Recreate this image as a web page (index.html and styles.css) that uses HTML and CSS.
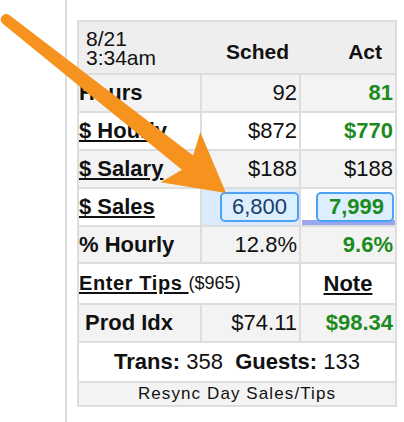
FILE: index.html
```html
<!DOCTYPE html>
<html>
<head>
<meta charset="utf-8">
<link rel="stylesheet" href="styles.css">
</head>
<body>
<div class="frame">
  <div class="grid">
    <div class="hdr">
      <div class="stamp"><div>8/21</div><div>3:34am</div></div>
      <div class="hcol">Sched</div>
      <div class="hcol act-h">Act</div>
    </div>

    <div class="cell lbl alt">Hours</div>
    <div class="cell num alt">92</div>
    <div class="cell num act alt">81</div>

    <div class="cell lbl"><a href="#">$ Hourly</a></div>
    <div class="cell num">$872</div>
    <div class="cell num act">$770</div>

    <div class="cell lbl alt"><a href="#">$ Salary</a></div>
    <div class="cell num alt">$188</div>
    <div class="cell num alt">$188</div>

    <div class="cell lbl"><a href="#">$ Sales</a></div>
    <div class="cell num focus"><input class="amt" value="6,800"></div>
    <div class="cell num bar"><input class="amt amt-act" value="7,999"></div>

    <div class="cell lbl alt">% Hourly</div>
    <div class="cell num alt">12.8%</div>
    <div class="cell num act alt">9.6%</div>

    <div class="cell tips span2"><a href="#">Enter Tips </a><span class="paren">($965)</span></div>
    <div class="cell note"><a href="#">Note</a></div>

    <div class="cell prod alt">Prod Idx</div>
    <div class="cell num alt">$74.11</div>
    <div class="cell num act alt">$98.34</div>

    <div class="cell trans span3"><b>Trans:</b>&nbsp;358&nbsp;&nbsp;<b>Guests:</b>&nbsp;133</div>

    <div class="cell resync span3 alt">Resync Day Sales/Tips</div>
  </div>
</div>

<svg class="arrow" width="404" height="422" viewBox="0 0 404 422" aria-hidden="true">
  <path transform="translate(226 193) rotate(38.28)" fill="#f6921e"
        d="M0,0 L-58,-32 L-49,-9 L-280,-5.5 A5.5,5.5 0 0 0 -280,5.5 L-49,9 L-58,32 Z"/>
</svg>
</body>
</html>
```

FILE: styles.css
```css
html, body {
  margin: 0;
  padding: 0;
  background: #fff;
}

body {
  font-family: "Liberation Sans", Arial, Helvetica, sans-serif;
  color: #111;
  position: relative;
  width: 404px;
  height: 422px;
  overflow: hidden;
}

.frame {
  margin-left: 65px;
  border-left: 2px solid #dddddd;
  height: 422px;
  box-sizing: border-box;
  padding: 20px 0 0 10px;
}

.grid {
  width: 320px;
  box-sizing: border-box;
  display: grid;
  grid-template-columns: 121px 97px 94px;
  grid-template-rows: 51px 36px 36px 36px 36px 35px 39px 36px 38px 22px;
  gap: 2px;
  padding: 2px;
  background: #dddddd;
}

.hdr {
  grid-column: 1 / 4;
  display: grid;
  grid-template-columns: 123px 99px 94px;
  background: #eeeeee;
}

.stamp {
  font-size: 21px;
  line-height: 19px;
  padding-left: 7px;
  align-self: center;
  display: flex;
  flex-direction: column;
}

.stamp div {
  height: 19px;
  line-height: 19px;
}

.hcol {
  font-size: 21px;
  font-weight: bold;
  text-align: right;
  align-self: center;
  padding-top: 9px;
  padding-right: 12px;
}

.act-h {
  padding-right: 13px;
}

.cell {
  background: #ffffff;
  display: flex;
  align-items: center;
  font-size: 22px;
  min-width: 0;
}

.cell.alt {
  background: #f3f3f3;
}

.cell a {
  color: inherit;
  text-decoration: underline;
  text-decoration-thickness: 2px;
  text-underline-offset: 2px;
}

.lbl {
  font-weight: bold;
  padding-left: 0;
  white-space: nowrap;
}

.num {
  justify-content: flex-end;
  padding-right: 2px;
}

.num.act {
  color: #1d8a1d;
  font-weight: bold;
}

.focus {
  background: #dcebfb;
  padding-right: 0;
}

.bar {
  padding-right: 1px;
  background: linear-gradient(#9aa6f0, #9aa6f0) left 1px bottom / 100% 5px no-repeat, #ffffff;
}

.amt {
  width: 79px;
  height: 30px;
  box-sizing: border-box;
  margin: 0;
  border: 2px solid #4ea2f5;
  border-radius: 5px;
  background: #ddeeff;
  font-family: "Liberation Sans", Arial, Helvetica, sans-serif;
  font-size: 22px;
  color: #173f6c;
  text-align: right;
  padding: 0 10px 0 0;
  outline: none;
}

.amt.amt-act {
  width: 78px;
  padding-right: 8px;
  color: #1d8a1d;
  font-weight: bold;
}

.span2 {
  grid-column: 1 / 3;
}

.span3 {
  grid-column: 1 / 4;
  justify-content: center;
}

.tips {
  padding-left: 0;
  white-space: nowrap;
}

.tips a {
  font-weight: bold;
  font-size: 20px;
  letter-spacing: 0.6px;
  white-space: pre;
}

.paren {
  font-size: 18px;
}

.note {
  justify-content: center;
  font-weight: bold;
  font-size: 22px;
}

.prod {
  font-weight: bold;
  padding-left: 6px;
}

.trans {
  font-size: 22px;
  white-space: nowrap;
}

.resync {
  font-size: 17px;
  letter-spacing: 1.1px;
}

.arrow {
  position: absolute;
  left: 0;
  top: 0;
  pointer-events: none;
}
```
